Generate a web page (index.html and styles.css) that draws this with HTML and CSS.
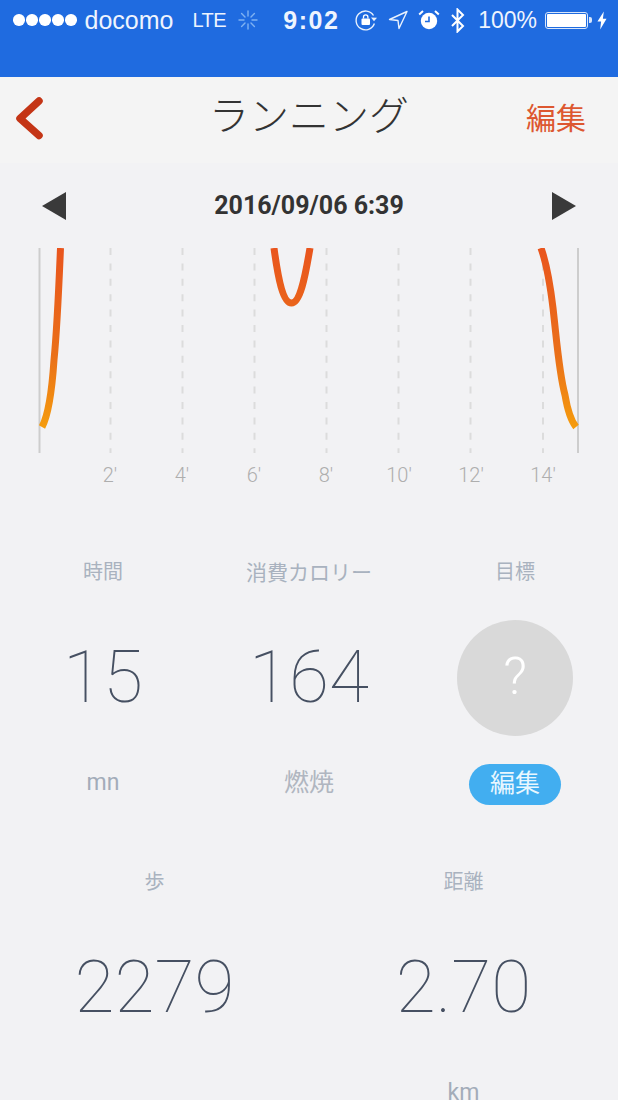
FILE: index.html
```html
<!DOCTYPE html>
<html lang="ja">
<head>
  <meta charset="UTF-8"/>
  <meta name="viewport" content="width=device-width, initial-scale=1.0"/>
  <title>ランニング</title>
  <link rel="stylesheet" href="styles.css">
</head>
<body>

  <div class="status-bar">
    <div class="status-left">
      <span class="signal"><i></i><i></i><i></i><i></i><i></i></span>
      <span class="carrier">docomo</span>
      <span class="network">LTE</span>
      <svg class="spinner" width="20" height="20" viewBox="0 0 20 20">
        <g stroke="#7fb2f2" stroke-width="1.4" stroke-linecap="round">
          <path d="M10 1v5M10 14v5M1 10h5M14 10h5M3.600 3.600l3.400 3.400M13 13l3.400 3.400M16.400 3.600L13 7M7 13l-3.400 3.400"/>
        </g>
      </svg>
    </div>
    <span class="clock">9:02</span>
    <div class="status-right">
      <svg class="icon-lock" width="24" height="24" viewBox="0 0 24 24" fill="none">
        <path d="M19.500 7.500A9.400 9.400 0 1 0 20.400 15.500" stroke="#e8f1fd" stroke-width="1.400"/>
        <path d="M17 9.500l6 .2-3 3.600z" fill="#e8f1fd"/>
        <rect x="7.500" y="10.500" width="8.500" height="6.500" rx="1" fill="#fff"/>
        <path d="M9.500 10.500V9a2.200 2.200 0 0 1 4.400 0v1.500" stroke="#fff" stroke-width="1.300"/>
      </svg>
      <svg class="icon-location" width="20" height="20" viewBox="0 0 20 20" fill="none">
        <path d="M19 1.500L1.500 9.500 10 10.500 11 18.500z" stroke="#e8f1fd" stroke-width="1.400" stroke-linejoin="round"/>
      </svg>
      <svg class="icon-alarm" width="22" height="22" viewBox="0 0 22 22">
        <circle cx="11" cy="12" r="8.200" fill="#fff"/>
        <path d="M11 7.500V12.500H7" fill="none" stroke="#1f6be0" stroke-width="1.600"/>
        <path d="M1.200 5.500L5 2M20.800 5.500L17 2" stroke="#fff" stroke-width="2"/>
      </svg>
      <svg class="icon-bt" width="16" height="25" viewBox="0 0 16 25" fill="none">
        <path d="M2 7l11 11-5.500 5.500V1.500L13 7 2 18" stroke="#fff" stroke-width="2"/>
      </svg>
      <span class="percent">100%</span>
      <span class="battery"><b></b></span>
      <svg class="icon-bolt" width="10" height="19" viewBox="0 0 11 20">
        <path d="M7.500 0L.5 11h4L3.500 20l7-12h-4z" fill="#fff"/>
      </svg>
    </div>
  </div>

  <div class="nav-bar">
    <svg class="back" width="30" height="44" viewBox="0 0 30 44" fill="none">
      <path d="M26 4L7 21.500l19 17" stroke="#c43516" stroke-width="7.500" stroke-linecap="round" stroke-linejoin="round"/>
    </svg>
    <h1>ランニング</h1>
    <a class="nav-edit">編集</a>
  </div>

  <div class="date-row">
    <span class="arrow arrow-left"></span>
    <span class="date">2016/09/06 6:39</span>
    <span class="arrow arrow-right"></span>
  </div>

  <svg class="chart" width="618" height="242" viewBox="0 0 618 242" fill="none">
    <defs>
      <linearGradient id="heat" gradientUnits="userSpaceOnUse" x1="0" y1="0" x2="0" y2="180">
        <stop offset="0" stop-color="#e9551d"/>
        <stop offset="0.6" stop-color="#ea7019"/>
        <stop offset="1" stop-color="#f59c0d"/>
      </linearGradient>
    </defs>
    <g stroke="#cdcdcd" stroke-width="2">
      <path d="M39.500 0V205M578 0V205"/>
    </g>
    <g stroke="#dcdcdc" stroke-width="2" stroke-dasharray="7 8.400">
      <path d="M110.500 0V205M182.500 0V205M254.500 0V205M326.500 0V205M398.500 0V205M470.500 0V205M543 0V205"/>
    </g>
    <g stroke="url(#heat)" stroke-width="7">
      <path d="M60.500 0C58 60 56 92 54 112C52 142 49 166 42 179"/>
      <path d="M274 0C278 30 283 55 291.500 55C300 55 305 30 310 0"/>
      <path d="M541 0C546 14 550 35 553 60C557 95 559 125 565 147C568 165 572 174 576 179"/>
    </g>
    <g class="tick">
      <text x="110" y="234">2'</text>
      <text x="182" y="234">4'</text>
      <text x="254" y="234">6'</text>
      <text x="326" y="234">8'</text>
      <text x="399" y="234">10'</text>
      <text x="471" y="234">12'</text>
      <text x="543" y="234">14'</text>
    </g>
  </svg>

  <div class="stats stats-top">
    <div class="stat">
      <div class="stat-label">時間</div>
      <div class="stat-value">15</div>
      <div class="stat-unit">mn</div>
    </div>
    <div class="stat">
      <div class="stat-label label-wide">消費カロリー</div>
      <div class="stat-value">164</div>
      <div class="stat-unit unit-jp">燃焼</div>
    </div>
    <div class="stat">
      <div class="stat-label">目標</div>
      <div class="stat-value"><span class="goal">?</span></div>
      <div class="stat-unit"><span class="edit-btn">編集</span></div>
    </div>
  </div>

  <div class="stats stats-bottom">
    <div class="stat">
      <div class="stat-label">歩</div>
      <div class="stat-value">2279</div>
    </div>
    <div class="stat">
      <div class="stat-label">距離</div>
      <div class="stat-value">2.70</div>
      <div class="stat-unit">km</div>
    </div>
  </div>

</body>
</html>
```

FILE: styles.css
```css
html, body {
  margin: 0;
  padding: 0;
  height: 1100px;
  overflow: hidden;
  background-color: #f2f2f4;
  font-family: "Roboto", "Noto Sans CJK JP", sans-serif;
}

/* status bar */
.status-bar {
  height: 77px;
  box-sizing: border-box;
  background-color: #1f6be0;
  color: #eef4fe;
  display: flex;
  align-items: flex-start;
  padding: 5px 11px 0 13px;
  font-family: "Liberation Sans", sans-serif;
}

.status-left,
.status-right {
  display: flex;
  align-items: center;
  height: 30px;
}

.status-right {
  margin-left: auto;
}

.signal {
  display: flex;
  gap: 1.5px;
  margin-right: 8px;
}

.signal i {
  width: 11.5px;
  height: 11.5px;
  border-radius: 50%;
  background-color: #fff;
}

.carrier {
  font-size: 25px;
}

.network {
  font-size: 20px;
  margin-left: 19px;
  letter-spacing: -0.5px;
}

.spinner {
  margin-left: 12px;
}

.clock {
  font-size: 25px;
  font-weight: bold;
  letter-spacing: 1.6px;
  line-height: 30px;
  margin-left: 25px;
}

.icon-location {
  margin-left: 10px;
}

.icon-alarm {
  margin-left: 10px;
}

.icon-bt {
  margin-left: 10px;
}

.percent {
  font-size: 23px;
  margin-left: 12px;
  margin-right: 8px;
}

.battery {
  width: 43px;
  height: 17px;
  box-sizing: border-box;
  border: 1px solid #d8e6fb;
  border-radius: 3px;
  padding: 1px;
  margin-right: 9px;
  position: relative;
  display: block;
}

.battery b {
  display: block;
  height: 100%;
  background-color: #fff;
  border-radius: 1px;
}

.battery::after {
  content: "";
  position: absolute;
  right: -5px;
  top: 4px;
  width: 3px;
  height: 6px;
  background-color: #d8e6fb;
  border-radius: 0 2px 2px 0;
}

/* nav */
.nav-bar {
  height: 86px;
  box-sizing: border-box;
  background-color: #f4f4f4;
  display: grid;
  grid-template-columns: 1fr auto 1fr;
  align-items: center;
  padding: 0 32px 8px;
}

.back {
  margin: 5px 0 0 -19px;
}

h1 {
  margin: 0 0 6px;
  font-family: "Noto Sans CJK JP", sans-serif;
  font-weight: 300;
  font-size: 40px;
  color: #333;
}

.nav-edit {
  justify-self: end;
  font-family: "Noto Sans CJK JP", sans-serif;
  font-weight: 400;
  font-size: 30px;
  color: #dd5730;
}

/* date */
.date-row {
  height: 85px;
  box-sizing: border-box;
  padding: 0 42px 0 42px;
  display: flex;
  align-items: center;
  justify-content: space-between;
}

.date {
  font-size: 25px;
  font-weight: bold;
  color: #333;
}

.arrow {
  width: 0;
  height: 0;
  border-top: 14px solid transparent;
  border-bottom: 14px solid transparent;
}

.arrow-left {
  border-right: 24px solid #3a3a3a;
}

.arrow-right {
  border-left: 24px solid #3a3a3a;
}

/* chart */
.chart {
  display: block;
}

.tick text {
  font-family: "Roboto", sans-serif;
  font-weight: 300;
  font-size: 20px;
  fill: #aeaeae;
  text-anchor: middle;
}

/* stats */
.stats {
  display: grid;
}

.stats-top {
  grid-template-columns: repeat(3, 206px);
  padding-top: 64px;
}

.stats-bottom {
  grid-template-columns: repeat(2, 309px);
  padding-top: 60px;
}

.stat {
  text-align: center;
}

.stat-label {
  font-family: "Noto Sans CJK JP", sans-serif;
  font-size: 20px;
  line-height: 34px;
  color: #a9b2bf;
}

.label-wide {
  font-size: 21px;
}

.stat-value {
  font-weight: 100;
  font-size: 73px;
  line-height: 118px;
  height: 118px;
  margin-top: 30px;
  color: #465062;
  display: flex;
  align-items: center;
  justify-content: center;
}

.stat-unit {
  font-size: 23px;
  line-height: 42px;
  height: 42px;
  margin-top: 26px;
  color: #a3acb9;
  display: flex;
  align-items: center;
  justify-content: center;
}

.unit-jp {
  margin-top: 23px;
  font-family: "Noto Sans CJK JP", sans-serif;
  font-size: 25px;
  font-weight: 400;
  color: #b0b6c0;
}

.goal {
  width: 116px;
  height: 116px;
  margin-top: 2px;
  border-radius: 50%;
  background-color: #d9d9d9;
  color: #fff;
  font-size: 52px;
  font-weight: 300;
  line-height: 114px;
  text-align: center;
}

.edit-btn {
  width: 92px;
  height: 41px;
  margin-top: 2px;
  border-radius: 21px;
  background-color: #42aef0;
  color: #e9f7ff;
  font-family: "Noto Sans CJK JP", sans-serif;
  font-size: 25px;
  font-weight: 400;
  line-height: 35px;
  text-align: center;
}
```
